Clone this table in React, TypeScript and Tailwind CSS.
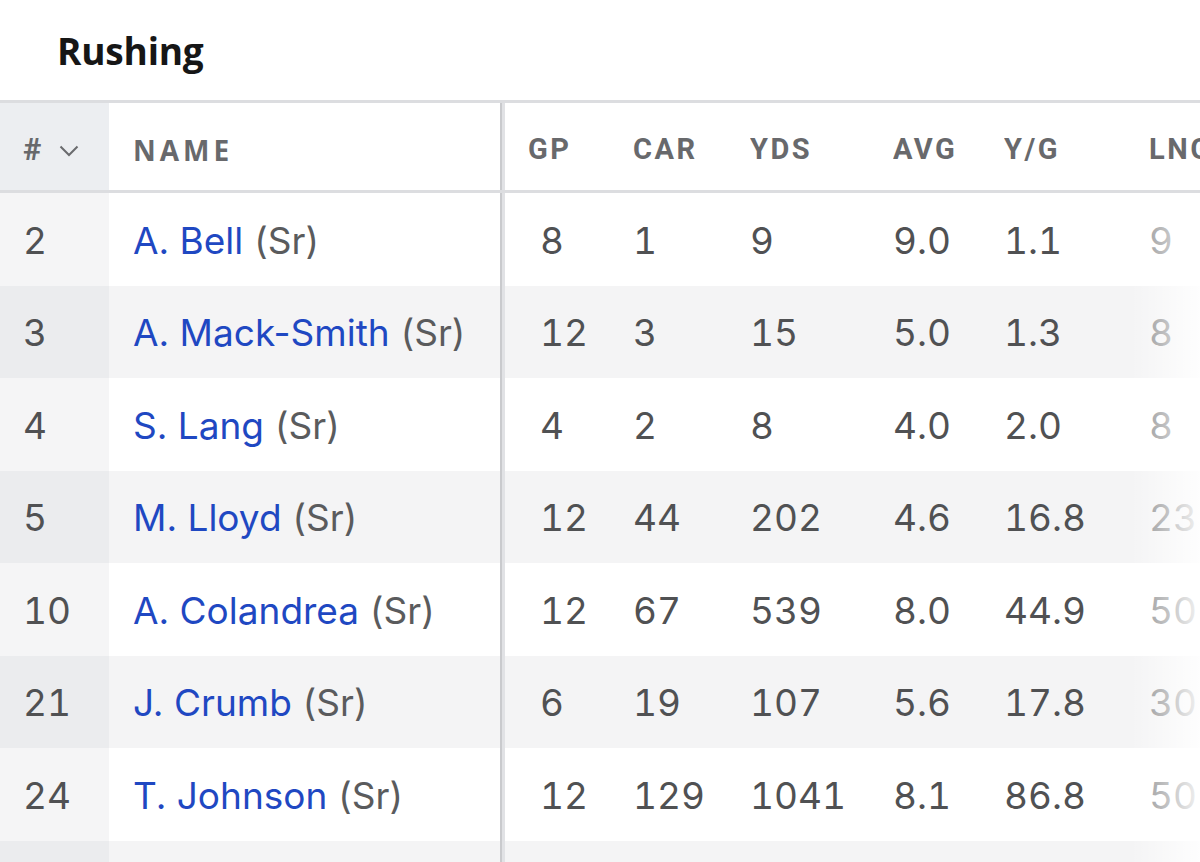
import React from "react";

type Row = { num: string; name: string; cls: string; stats: string[] };

const rows: Row[] = [
  { num: "2", name: "A. Bell", cls: "(Sr)", stats: ["8", "1", "9", "9.0", "1.1", "9"] },
  { num: "3", name: "A. Mack-Smith", cls: "(Sr)", stats: ["12", "3", "15", "5.0", "1.3", "8"] },
  { num: "4", name: "S. Lang", cls: "(Sr)", stats: ["4", "2", "8", "4.0", "2.0", "8"] },
  { num: "5", name: "M. Lloyd", cls: "(Sr)", stats: ["12", "44", "202", "4.6", "16.8", "23"] },
  { num: "10", name: "A. Colandrea", cls: "(Sr)", stats: ["12", "67", "539", "8.0", "44.9", "50"] },
  { num: "21", name: "J. Crumb", cls: "(Sr)", stats: ["6", "19", "107", "5.6", "17.8", "30"] },
  { num: "24", name: "T. Johnson", cls: "(Sr)", stats: ["12", "129", "1041", "8.1", "86.8", "50"] },
  { num: "", name: "", cls: "", stats: ["", "", "", "", "", ""] },
];

const statHeads = ["GP", "CAR", "YDS", "AVG", "Y/G", "LNG"];
// widths of the stat columns, left to right
const statWidths = ["w-[128px]", "w-[117px]", "w-[143px]", "w-[111px]", "w-[145px]", "flex-1"];

const Divider = () => (
  <div className="flex w-[5px] shrink-0">
    <div className="w-[2px] bg-[#c9cacd]" />
    <div className="w-[3px] bg-[#e1e2e5]" />
  </div>
);

export default function App() {
  return (
    <div className="w-[1200px] h-[862px] overflow-hidden bg-white font-['Inter',sans-serif]">
      {/* Title */}
      <div className="h-[100px] pl-[57px] pt-[26px]">
        <h1 className="font-['Open_Sans',sans-serif] text-[37px] font-bold leading-[50px] text-[#161616] tracking-[-0.2px]">
          Rushing
        </h1>
      </div>

      {/* Table */}
      <div className="border-t-[3px] border-[#dcdde0]">
        {/* Header */}
        <div className="flex h-[90px] border-b-[3px] border-[#dcdde0] font-['Roboto',sans-serif] font-bold text-[#68696c]">
          <div className="flex w-[109px] shrink-0 items-center gap-[18px] bg-[#eceef1] pl-[23px] pt-[6px]">
            <span className="text-[31px] leading-none">#</span>
            <svg width="20" height="12" viewBox="0 0 20 12" fill="none" className="mt-[2px]">
              <path d="M1.5 1.5 L10 10 L18.5 1.5" stroke="#6a6b6e" strokeWidth="2" />
            </svg>
          </div>
          <div className="flex w-[391px] shrink-0 items-center pl-[24px] pt-[6px] font-['Open_Sans',sans-serif] text-[28px] font-bold tracking-[4px]">
            NAME
          </div>
          <Divider />
          {statHeads.map((h, i) => (
            <div
              key={h}
              className={`flex items-center pt-[6px] text-[29px] tracking-[2.5px] whitespace-nowrap overflow-hidden ${statWidths[i]} ${i === 0 ? "pl-[23px]" : ""}`}
            >
              {h}
            </div>
          ))}
        </div>

        {/* Body */}
        <div className="relative">
          {rows.map((r, idx) => {
            const striped = idx % 2 === 1;
            return (
              <div
                key={idx}
                className={`flex h-[92.5px] text-[37px] text-[#505153] ${striped ? "bg-[#f4f4f5]" : "bg-white"}`}
              >
                <div
                  className={`flex w-[109px] shrink-0 items-center pl-[23px] pt-[2px] tabular-nums ${striped ? "bg-[#ebecee]" : "bg-[#f5f5f6]"}`}
                >
                  {r.num}
                </div>
                <div className="flex w-[391px] shrink-0 items-center pl-[24px] pt-[2px] whitespace-nowrap">
                  <span className="text-[#1f48c2]">{r.name}</span>
                  {r.cls && <span className="ml-[11px] text-[#5a5b5d]">{r.cls}</span>}
                </div>
                <Divider />
                {r.stats.map((s, i) => (
                  <div
                    key={i}
                    className={`flex items-center pt-[2px] tabular-nums whitespace-nowrap overflow-hidden ${statWidths[i]} ${i === 0 ? "pl-[35px]" : ""} ${i === 5 ? "text-[#8a8b8d]" : ""}`}
                  >
                    {s}
                  </div>
                ))}
              </div>
            );
          })}
          {/* right edge fade */}
          <div className="pointer-events-none absolute inset-y-0 right-0 w-[70px] bg-gradient-to-r from-white/0 to-white/90" />
        </div>
      </div>
    </div>
  );
}
